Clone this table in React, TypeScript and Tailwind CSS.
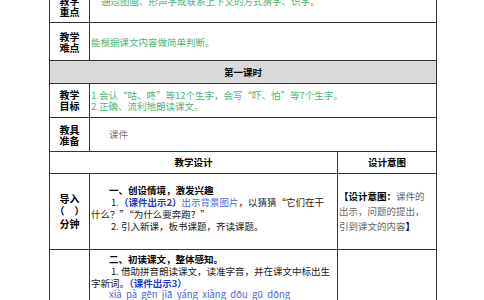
import React from 'react'

const cjk = { fontFamily: '"Noto Sans CJK SC", "Noto Sans", sans-serif' }

// label cell for the left column
function Label({ lines, leading = 'leading-[11px]' }: { lines: string[]; leading?: string }) {
  return (
    <td className={`border border-[#333] text-center align-middle font-bold text-[10px] text-black ${leading}`}>
      {lines.map((l, i) => (
        <div key={i} className="whitespace-nowrap">{l}</div>
      ))}
    </td>
  )
}

export default function App() {
  return (
    <div className="w-[484px] h-[300px] overflow-hidden bg-white" style={cjk}>
      <table className="table-fixed border-collapse ml-[49px] mt-[-11px] w-[387px]">
        <colgroup>
          <col className="w-[40px]" />
          <col className="w-[248px]" />
          <col className="w-[99px]" />
        </colgroup>
        <tbody>
          {/* 教学重点 */}
          <tr className="h-[33px]">
            <Label lines={['教学', '重点']} />
            <td colSpan={2} className="border border-[#333] align-top pt-[5px] pl-[11px] text-[9.5px] leading-[12px] text-[#4db37a] whitespace-nowrap">
              通过图画、形声字或联系上下文的方式猜字、识字。
            </td>
          </tr>

          {/* 教学难点 */}
          <tr className="h-[38px]">
            <Label lines={['教学', '难点']} />
            <td colSpan={2} className="border border-[#333] align-middle pl-[1px] text-[9.5px] leading-[12px] text-[#4db37a] whitespace-nowrap">
              能根据课文内容做简单判断。
            </td>
          </tr>

          {/* 第一课时 */}
          <tr className="h-[23px] bg-[#d9d9d9]">
            <td colSpan={3} className="border border-[#333] text-center align-middle font-bold text-[9.5px] text-black">
              第一课时
            </td>
          </tr>

          {/* 教学目标 */}
          <tr className="h-[34px]">
            <Label lines={['教学', '目标']} leading="leading-[10.5px]" />
            <td colSpan={2} className="border border-[#333] align-middle pl-[1px] text-[9.5px] leading-[10.5px] text-[#4db37a] whitespace-nowrap">
              <div>1.会认“咕、咚”等12个生字，会写“吓、怕”等7个生字。</div>
              <div>2.正确、流利地朗读课文。</div>
            </td>
          </tr>

          {/* 教具准备 */}
          <tr className="h-[34px]">
            <Label lines={['教具', '准备']} />
            <td colSpan={2} className="border border-[#333] align-middle pl-[19px] text-[9.5px] text-[#777]">
              课件
            </td>
          </tr>

          {/* 表头 */}
          <tr className="h-[22px]">
            <td colSpan={2} className="border border-[#333] text-center align-middle font-bold text-[9.5px] text-black">
              教学设计
            </td>
            <td className="border border-[#333] text-center align-middle font-bold text-[9.5px] text-black">
              设计意图
            </td>
          </tr>

          {/* 导入 */}
          <tr className="h-[76px]">
            <Label lines={['导入', '（　）', '分钟']} leading="leading-[12.5px]" />
            <td className="border border-[#333] align-top pt-[10px] pl-[1px] text-[9.5px] leading-[12px] text-[#222] whitespace-nowrap overflow-hidden">
              <div className="pl-[18px] font-bold text-black">一、创设情境，激发兴趣</div>
              <div className="pl-[20px]">
                1.
                <span className="font-bold text-[#2438c8]">（课件出示2）</span>
                <span className="text-[#4a68dc]">出示背景图片</span>，以猜猜“它们在干
              </div>
              <div>什么？”“为什么要奔跑？”</div>
              <div className="pl-[20px]">2. 引入新课，板书课题，齐读课题。</div>
            </td>
            <td className="border border-[#333] align-middle pl-[1px] text-[9.5px] leading-[15px] text-[#666] whitespace-nowrap">
              <div><span className="font-bold text-black">【设计意图：</span>课件的</div>
              <div>出示，问题的提出，</div>
              <div>引到课文的内容<span className="font-bold text-black">】</span></div>
            </td>
          </tr>

          {/* 初读 */}
          <tr className="h-[80px]">
            <td className="border border-[#333]" />
            <td className="border border-[#333] align-top pt-[3px] pl-[1px] text-[9.5px] leading-[12px] text-[#222] whitespace-nowrap overflow-hidden">
              <div className="pl-[18px] font-bold text-black">二、初读课文，整体感知。</div>
              <div className="pl-[20px]">1. 借助拼音朗读课文，读准字音，并在课文中标出生</div>
              <div>
                字新词。<span className="font-bold text-[#2438c8]">（课件出示3）</span>
              </div>
              <div className="pl-[18px] text-[#4a68dc] leading-[10px]">
                xià&nbsp; pà&nbsp; gēn&nbsp; jiā&nbsp; yáng&nbsp; xiàng&nbsp; dōu&nbsp; gū&nbsp; dōng
              </div>
              <div className="pl-[18px] text-[#4a68dc]">吓&nbsp;&nbsp; 怕&nbsp;&nbsp; 跟&nbsp;&nbsp; 家&nbsp;&nbsp; 羊&nbsp;&nbsp; 象&nbsp;&nbsp; 都&nbsp;&nbsp; 咕&nbsp;&nbsp; 咚</div>
            </td>
            <td className="border border-[#333]" />
          </tr>
        </tbody>
      </table>
    </div>
  )
}
